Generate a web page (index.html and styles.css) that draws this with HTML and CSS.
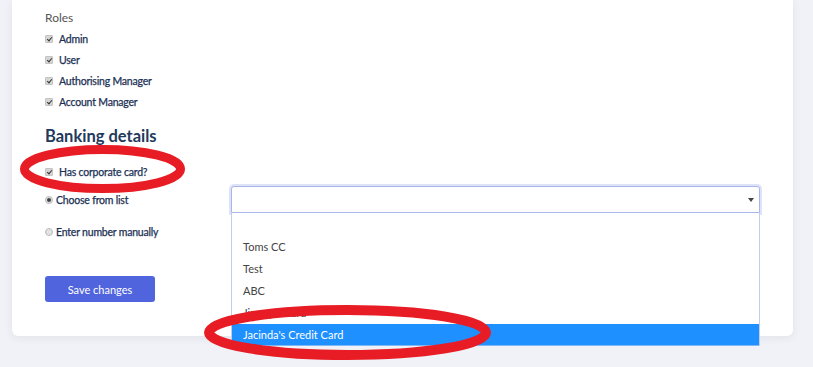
FILE: index.html
```html
<!DOCTYPE html>
<html lang="en">
<head>
  <meta charset="UTF-8" />
  <meta name="viewport" content="width=device-width, initial-scale=1.0" />
  <title>Edit user - Banking details</title>
  <link rel="stylesheet" href="styles.css">
</head>
<body>
  <div class="card">
    <!-- Roles -->
    <p class="section-label">Roles</p>
    <div class="roles">
      <div class="check-row"><span class="check"></span><span>Admin</span></div>
      <div class="check-row"><span class="check"></span><span>User</span></div>
      <div class="check-row"><span class="check"></span><span>Authorising Manager</span></div>
      <div class="check-row"><span class="check"></span><span>Account Manager</span></div>
    </div>

    <!-- Banking details -->
    <h2>Banking details</h2>
    <div class="check-row corporate"><span class="check"></span><span>Has corporate card?</span></div>

    <div class="card-source">
      <div class="source-options">
        <div class="radio-row"><span class="radio on"></span><span>Choose from list</span></div>
        <div class="radio-row"><span class="radio"></span><span>Enter number manually</span></div>
      </div>

      <div class="select-wrap">
        <div class="select-box"><span class="select-arrow"></span></div>
        <ul class="select-list">
          <li>&nbsp;</li>
          <li>Toms CC</li>
          <li>Test</li>
          <li>ABC</li>
          <li>Jimmy's Card</li>
          <li class="highlighted">Jacinda's Credit Card</li>
        </ul>
      </div>
    </div>

    <button class="btn-save">Save changes</button>
  </div>

  <!-- red annotation marks -->
  <svg class="annotations" width="813" height="367" viewBox="0 0 813 367">
    <ellipse cx="102.5" cy="169" rx="78" ry="19.5" fill="none" stroke="#e81c24" stroke-width="9" />
    <ellipse cx="347.5" cy="332.5" rx="138.5" ry="22.5" fill="none" stroke="#e81c24" stroke-width="10" />
  </svg>
</body>
</html>
```

FILE: styles.css
```css
/* Global */
* { box-sizing: border-box; margin: 0; padding: 0; }
body {
  font-family: Lato, 'Open Sans', sans-serif;
  background-color: #f1f2f7;
  color: #1b3054;
  width: 813px;
  height: 367px;
  overflow: hidden;
  position: relative;
}

/* Card */
.card {
  margin-left: 12px;
  width: 781px;
  padding: 9px 33px 34px;
  background: #ffffff;
  border-radius: 0 0 6px 6px;
  box-shadow: 0 2px 8px rgba(40, 50, 90, 0.08);
}
.section-label {
  font-size: 12px;
  line-height: 18px;
  color: #555;
}
.roles { margin-top: 1px; }

/* Checkbox rows */
.check-row, .radio-row {
  display: flex;
  align-items: center;
  font-size: 10.5px;
  letter-spacing: -0.2px;
  -webkit-text-stroke: 0.25px #1b3054;
}
.check-row { height: 21px; }
.check {
  position: relative;
  width: 8px;
  height: 8px;
  margin-right: 6px;
  border-radius: 1px;
  background: #d6d6d6;
  border: 1px solid #c4c4c4;
}
.check::after {
  content: "";
  position: absolute;
  left: 2px;
  top: 0;
  width: 2px;
  height: 4px;
  border: solid #333;
  border-width: 0 1.5px 1.5px 0;
  transform: rotate(40deg);
}
.check-row.corporate { margin-top: 13px; }

h2 {
  margin-top: 12px;
  font-size: 16.5px;
  line-height: 24px;
  font-weight: 700;
  color: #22395b;
}

/* Card source: radios + select */
.card-source {
  display: grid;
  grid-template-columns: 186px 1fr;
  margin-top: 4px;
}
.source-options {
  display: flex;
  flex-direction: column;
  gap: 5px;
}
.radio-row { height: 27px; }
.radio {
  position: relative;
  width: 8px;
  height: 8px;
  margin-right: 3px;
  border-radius: 50%;
  background: #e2e2e2;
  border: 1px solid #bdbdbd;
}
.radio.on::after {
  content: "";
  position: absolute;
  left: 1px;
  top: 1px;
  width: 4px;
  height: 4px;
  border-radius: 50%;
  background: #444;
}

.select-wrap { position: relative; }
.select-box {
  position: relative;
  height: 27px;
  border: 1px solid #a9b6ea;
  border-radius: 3px 3px 0 0;
  box-shadow: 0 0 0 2px #dfe3f8;
  background: #fff;
}
.select-arrow {
  position: absolute;
  right: 5px;
  top: 11px;
  border-left: 3px solid transparent;
  border-right: 3px solid transparent;
  border-top: 4px solid #444;
}
.select-list {
  position: absolute;
  top: 27px;
  left: 0;
  right: 0;
  list-style: none;
  background: #fff;
  border-left: 1px solid #c5cde9;
  border-right: 1px solid #c5cde9;
  z-index: 2;
}
.select-list li {
  height: 22px;
  line-height: 22px;
  padding-left: 11px;
  font-size: 11px;
  color: #444;
}
.select-list li:first-child { height: 23px; }
.select-list li.highlighted {
  background: #1e90ff;
  color: #fff;
  border-bottom: 1px solid #7fb8f5;
}

/* Button */
.btn-save {
  display: block;
  margin-top: 31px;
  width: 110px;
  height: 26px;
  border: none;
  border-radius: 3px;
  background: #4f64dd;
  color: #fff;
  font-family: inherit;
  font-size: 11px;
}

/* Annotation overlay */
.annotations {
  position: absolute;
  top: 0;
  left: 0;
  pointer-events: none;
  z-index: 5;
}
```
